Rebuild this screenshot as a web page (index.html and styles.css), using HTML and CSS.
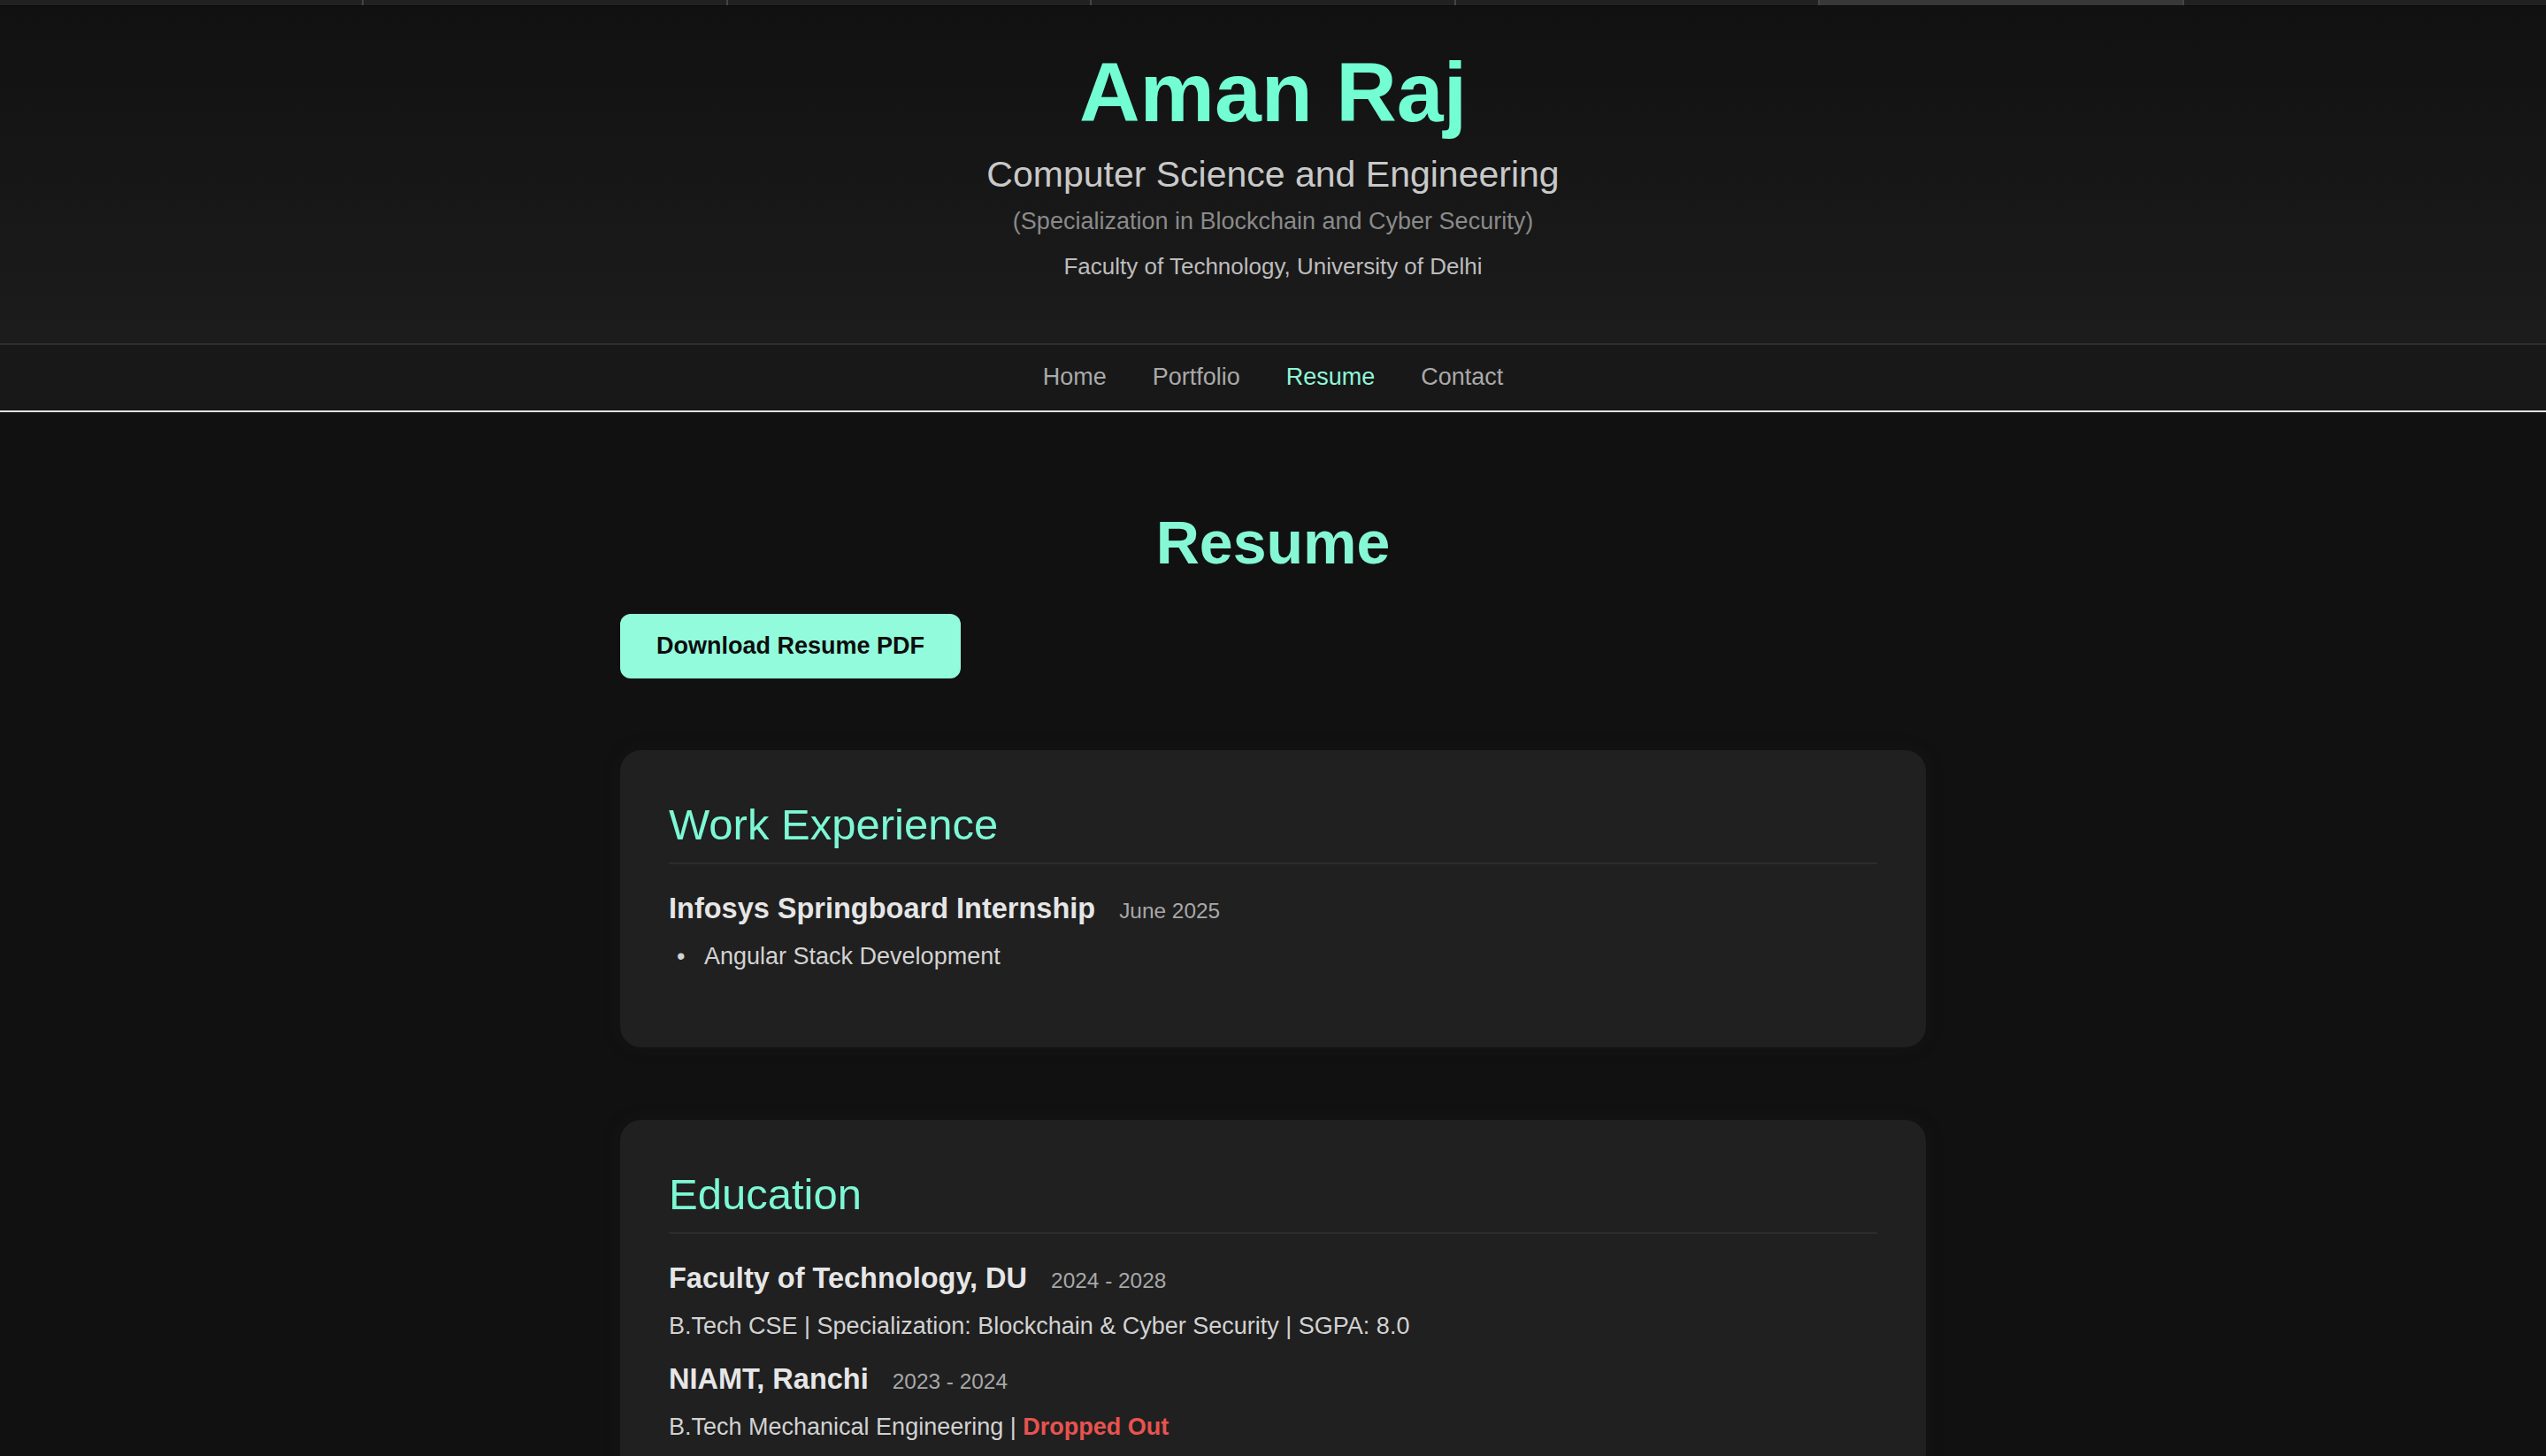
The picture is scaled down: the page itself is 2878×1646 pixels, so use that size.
FILE: index.html
```html
<!DOCTYPE html>
<html lang="en">
<head>
<meta charset="utf-8">
<title>Resume - Aman Raj</title>
<link rel="stylesheet" href="styles.css">
</head>
<body>
<div class="tabstrip">
  <div class="tab"></div>
  <div class="tab"></div>
  <div class="tab"></div>
  <div class="tab"></div>
  <div class="tab"></div>
  <div class="tab active"></div>
  <div class="tab"></div>
</div>
<header class="site-header">
  <h1 class="name">Aman Raj</h1>
  <p class="subtitle">Computer Science and Engineering</p>
  <p class="spec">(Specialization in Blockchain and Cyber Security)</p>
  <p class="faculty">Faculty of Technology, University of Delhi</p>
</header>
<nav class="site-nav">
  <a href="#" class="nav-link">Home</a>
  <a href="#" class="nav-link">Portfolio</a>
  <a href="#" class="nav-link active">Resume</a>
  <a href="#" class="nav-link">Contact</a>
</nav>
<main class="content">
  <h2 class="page-title">Resume</h2>
  <a href="#" class="download-btn">Download Resume PDF</a>

  <section class="card">
    <h3 class="card-title">Work Experience</h3>
    <div class="entry-title">Infosys Springboard Internship <span class="date">June 2025</span></div>
    <ul class="points">
      <li>Angular Stack Development</li>
    </ul>
  </section>

  <section class="card">
    <h3 class="card-title">Education</h3>
    <div class="entry-title">Faculty of Technology, DU <span class="date">2024 - 2028</span></div>
    <p class="entry-desc">B.Tech CSE | Specialization: Blockchain &amp; Cyber Security | SGPA: 8.0</p>
    <div class="entry-title next">NIAMT, Ranchi <span class="date">2023 - 2024</span></div>
    <p class="entry-desc">B.Tech Mechanical Engineering | <strong class="dropped">Dropped Out</strong></p>
  </section>
</main>
</body>
</html>
```
FILE: styles.css
```css
* {
  box-sizing: border-box;
  margin: 0;
  padding: 0;
}

html, body {
  background: #111111;
}

body {
  font-family: "Liberation Sans", Arial, Helvetica, sans-serif;
  color: #dddddd;
  overflow: hidden;
}

.tabstrip {
  display: flex;
  height: 7px;
  border-bottom: 1px solid #0a0a0a;
}

.tab {
  flex: 1;
  background: #212121;
  border-left: 2px solid #444444;
}

.tab:first-child {
  border-left: none;
}

.tab.active {
  background: #383838;
}

.site-header {
  background: linear-gradient(#111111, #1c1c1c);
  text-align: center;
  padding: 41px 0 71px;
  border-bottom: 2px solid #2e2e2e;
}

.name {
  font-size: 95px;
  line-height: 113px;
  font-weight: bold;
  color: #72fdd2;
}

.subtitle {
  margin-top: 12px;
  font-size: 41px;
  line-height: 48px;
  color: #c9c9c9;
}

.spec {
  margin-top: 13px;
  font-size: 27px;
  line-height: 32px;
  color: #8a8a8a;
}

.faculty {
  margin-top: 19px;
  font-size: 26px;
  line-height: 32px;
  color: #bdbdbd;
}

.site-nav {
  display: flex;
  justify-content: center;
  align-items: center;
  gap: 52px;
  height: 76px;
  padding-bottom: 3px;
  background: #181818;
  border-bottom: 2px solid #e2e2e2;
}

.nav-link {
  font-size: 27px;
  line-height: 32px;
  color: #a9a9a9;
  text-decoration: none;
}

.nav-link.active {
  color: #8ff6d8;
}

.content {
  width: 1476px;
  margin: 0 auto;
  padding-top: 106px;
}

.page-title {
  font-size: 68px;
  line-height: 82px;
  font-weight: bold;
  text-align: center;
  color: #86f7d5;
}

.download-btn {
  display: inline-flex;
  align-items: center;
  height: 73px;
  margin-top: 40px;
  padding: 0 41px;
  background: #92fbdb;
  color: #0d0d0d;
  font-size: 27px;
  font-weight: bold;
  text-decoration: none;
  border-radius: 12px;
}

.card {
  margin-top: 81px;
  padding: 55px;
  background: #202020;
  border-radius: 24px;
  box-shadow: 0 0 20px rgba(40, 40, 40, 0.2);
}

.card + .card {
  margin-top: 82px;
}

.card-title {
  font-size: 49px;
  line-height: 58px;
  font-weight: normal;
  color: #7cf8d4;
  padding-bottom: 14px;
  border-bottom: 2px solid #2c2c2c;
}

.entry-title {
  margin-top: 31px;
  font-size: 32.5px;
  line-height: 39px;
  font-weight: bold;
  color: #e6e6e6;
}

.entry-title.next {
  margin-top: 21px;
}

.date {
  margin-left: 18px;
  font-size: 24.4px;
  font-weight: normal;
  color: #a8a8a8;
}

.points {
  margin-top: 12px;
  margin-bottom: 28px;
  padding-left: 40px;
  list-style: none;
}

.points li {
  font-size: 27px;
  line-height: 40px;
  color: #d2d2d2;
}

.points li::before {
  content: "\2022";
  display: inline-block;
  width: 31px;
  margin-left: -31px;
  color: #d2d2d2;
}

.entry-desc {
  margin-top: 12px;
  font-size: 27px;
  line-height: 40px;
  color: #d2d2d2;
}

.dropped {
  color: #e8534f;
  font-weight: bold;
}
```
